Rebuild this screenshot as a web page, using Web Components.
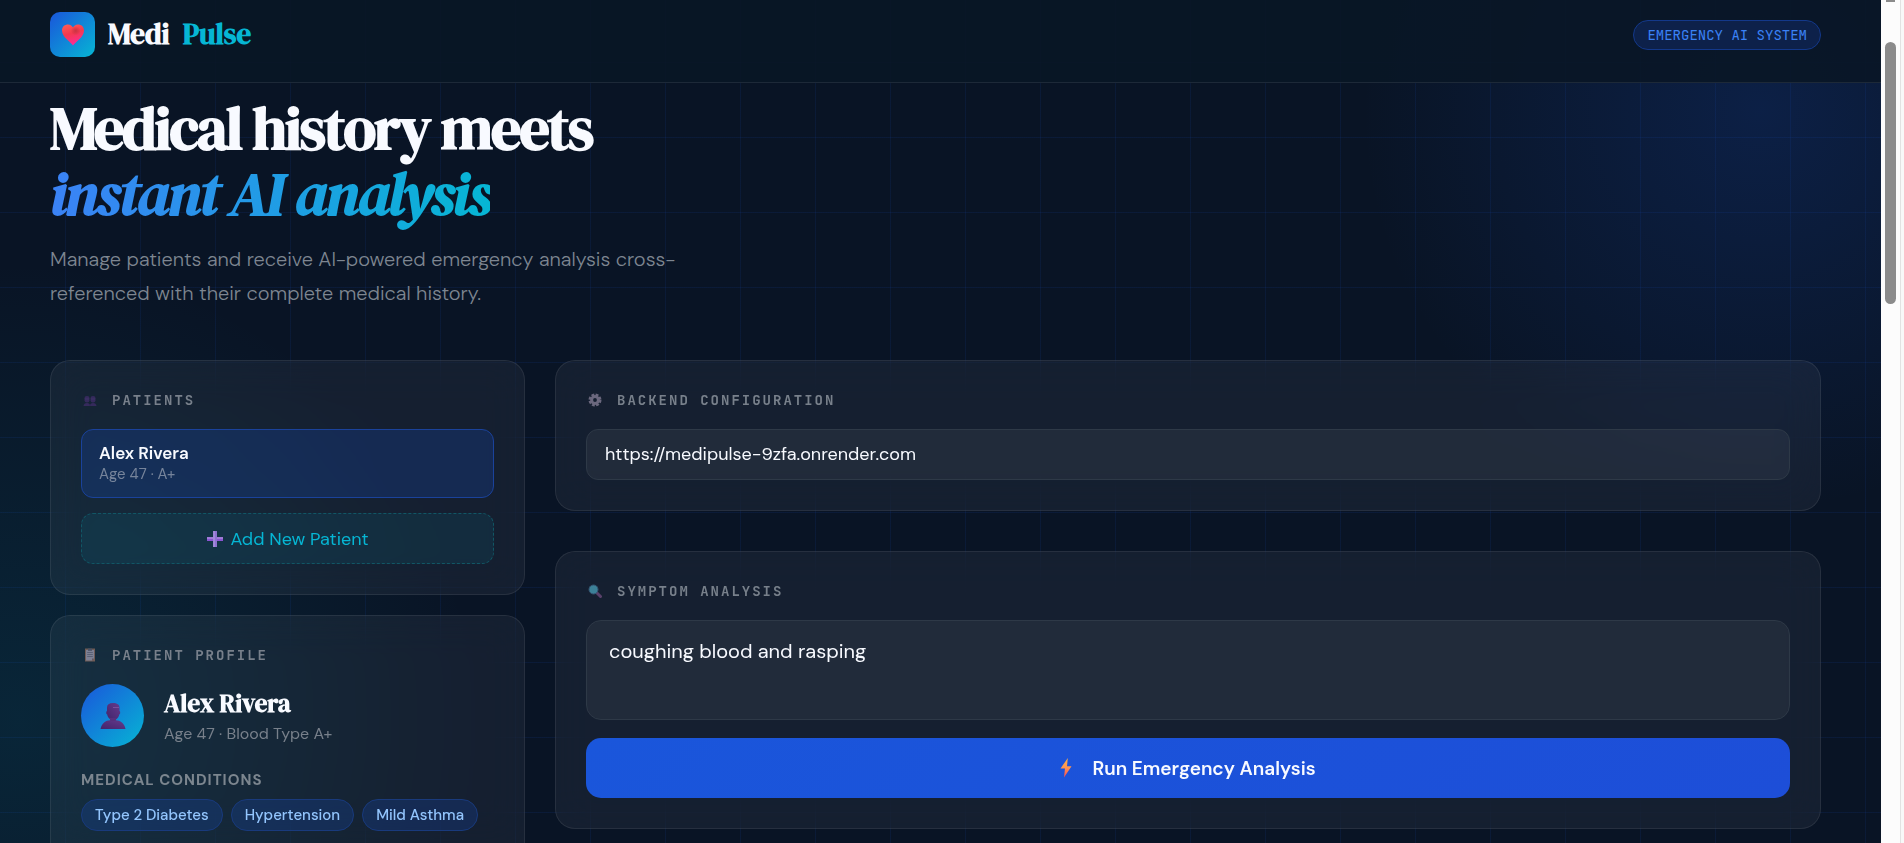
<!DOCTYPE html>
<html lang="en">
<head>
<meta charset="UTF-8">
<meta name="viewport" content="width=device-width, initial-scale=1.0">
<title>MediPulse</title>
<style>
  :root {
    --blue: #1a56db;
    --cyan: #06b6d4;
    --text: #f8faff;
    --muted: #78808b;
    --sans: 'DM Sans', Inter, sans-serif;
    --serif: 'DM Serif Display', 'Liberation Serif', serif;
    --mono: 'JetBrains Mono', 'Liberation Mono', monospace;
  }
  body {
    margin: 0;
    background: #091425;
    color: var(--text);
    font-family: var(--sans);
  }
</style>
</head>
<body>
<medi-app>
  <medi-header slot="header"></medi-header>
  <medi-hero></medi-hero>
  <medi-dashboard>
    <medi-card slot="side" label="Patients" icon="people">
      <patient-item name="Alex Rivera" info="Age 47 · A+"></patient-item>
      <add-patient></add-patient>
    </medi-card>
    <medi-card slot="side" label="Patient Profile" icon="clipboard">
      <patient-profile name="Alex Rivera" info="Age 47 · Blood Type A+">
        <medi-tag>Type 2 Diabetes</medi-tag>
        <medi-tag>Hypertension</medi-tag>
        <medi-tag>Mild Asthma</medi-tag>
      </patient-profile>
    </medi-card>
    <medi-card slot="main" label="Backend Configuration" icon="gear">
      <backend-url value="https://medipulse-9zfa.onrender.com"></backend-url>
    </medi-card>
    <medi-card slot="main" label="Symptom Analysis" icon="search">
      <symptom-form value="coughing blood and rasping"></symptom-form>
    </medi-card>
  </medi-dashboard>
</medi-app>

<script>
const icons = {
  heart: `
    <svg viewBox="0 0 24 24" width="24" height="24" aria-hidden="true">
      <defs>
        <linearGradient id="h" x1="0.2" y1="0" x2="0.5" y2="1">
          <stop offset="0" stop-color="#ff5a55"/><stop offset="0.45" stop-color="#f4394f"/><stop offset="1" stop-color="#ff2a9b"/>
        </linearGradient>
        <radialGradient id="s" cx="0.62" cy="0.3" r="0.22">
          <stop offset="0" stop-color="#c93343"/><stop offset="1" stop-color="#c93343" stop-opacity="0"/>
        </radialGradient>
      </defs>
      <path fill="url(#h)" d="M12 22.500C10 19 1 14.500 1 7.500C1 3.500 4 1.500 7 1.500C9.500 1.500 11.200 3 12 4.500C12.800 3 14.500 1.500 17 1.500C20 1.500 23 3.500 23 7.500C23 14.500 14 19 12 22.500Z"/>
      <path fill="url(#s)" d="M12 22.500C10 19 1 14.500 1 7.500C1 3.500 4 1.500 7 1.500C9.500 1.500 11.200 3 12 4.500C12.800 3 14.500 1.500 17 1.500C20 1.500 23 3.500 23 7.500C23 14.500 14 19 12 22.500Z"/>
    </svg>`,
  people: `
    <svg viewBox="0 0 14 14" width="14" height="14" aria-hidden="true">
      <g fill="#352a5c">
        <rect x="1.500" y="3" width="5" height="6.500" rx="2.200"/><rect x="7.500" y="3" width="5" height="6.500" rx="2.200"/>
        <path d="M.5 13C.5 11 2 10 4 10S7 10.800 7 13ZM7 13C7 10.800 8 10 10 10S13.500 11 13.500 13Z"/>
      </g>
      <path d="M2 6h4M8 6h4" stroke="#43366c" stroke-width=".8"/>
    </svg>`,
  clipboard: `
    <svg viewBox="0 0 14 14" width="14" height="14" aria-hidden="true">
      <path fill="#705c56" d="M2 .5h10v13H2z"/>
      <path fill="#7d8094" d="M3 2h8v8.500L9 12.500H3z"/>
      <path fill="#4b5265" d="M5 .5h4v2.300H5z"/>
      <path d="M4.200 4.500h5.600M4.200 6.500h5.600M4.200 8.500h5.600" stroke="#555d73" stroke-width=".9"/>
      <path fill="#5c5560" d="M9 12.500v-2h2z"/>
    </svg>`,
  gear: `
    <svg viewBox="0 0 14 14" width="14" height="14" aria-hidden="true">
      <circle cx="7" cy="7" r="5.300" fill="none" stroke="#6b687e" stroke-width="2.400" stroke-dasharray="2.800 1.363"/>
      <circle cx="7" cy="7" r="3.400" fill="none" stroke="#6b687e" stroke-width="3"/>
    </svg>`,
  search: `
    <svg viewBox="0 0 14 14" width="14" height="14" aria-hidden="true">
      <path d="M9 9l3.500 3.500" stroke="#59406a" stroke-width="3" stroke-linecap="round"/>
      <circle cx="5.500" cy="5.500" r="4.500" fill="#3c8198" stroke="#355572" stroke-width="1"/>
    </svg>`,
  plus: `
    <svg viewBox="0 0 18 18" width="18" height="18" aria-hidden="true">
      <path fill="#8a54d2" d="M1 7.200h16v3.800H1z"/>
      <path fill="#a985dd" d="M1 7.200h16v1.600H1z"/>
      <path fill="#8f72d0" d="M7.200 1h3.800v16H7.200z"/>
      <path fill="#a98fe0" d="M7.200 1h1.600v16H7.200z"/>
    </svg>`,
  person: `
    <svg viewBox="0 0 26 26" width="26" height="26" aria-hidden="true">
      <defs>
        <linearGradient id="g" x1="0" y1="1" x2="1" y2="0">
          <stop offset="0" stop-color="#42246b"/><stop offset="1" stop-color="#643a8c"/>
        </linearGradient>
      </defs>
      <path fill="url(#g)" d="M7 4.500C7 1.500 9 0 13 0S19.500 1.500 19.500 4.500V8C20.500 8 20.500 11.500 19.200 11.500C18.800 15 16 17 13.200 17S7.700 15 7.200 11.500C6 11.500 6 8 7 8Z"/>
      <path fill="#57307b" d="M10 15h6v4h-6z"/>
      <path fill="url(#g)" d="M.5 26C1.500 20 6 17.300 10 17.200Q13 19 16 17.200C20 17.300 24.500 20 25.500 26Z"/>
      <path stroke="#7a4f9c" stroke-width="1" d="M13 4.500h6"/>
    </svg>`,
  bolt: `
    <svg viewBox="0 0 12 20" width="12" height="20" aria-hidden="true">
      <defs>
        <linearGradient id="b" x1="0" y1="0" x2="0" y2="1">
          <stop offset="0" stop-color="#ffb347"/><stop offset="0.5" stop-color="#ff9350"/><stop offset="1" stop-color="#f84a55"/>
        </linearGradient>
      </defs>
      <path fill="url(#b)" d="M7.800 0L.5 10.500H5L4 19.500L11.500 8.300H7Z"/>
    </svg>`
};

// Shared base: every element renders its template once into an open shadow root
class MediElement extends HTMLElement {
  constructor() {
    super();
    this.attachShadow({ mode: 'open' });
  }

  attr(name) {
    return this.getAttribute(name) || '';
  }

  connectedCallback() {
    const template = document.createElement('template');
    template.innerHTML = `
      <style>
        * { box-sizing: border-box; }
        :host { display: block; }
        svg { display: block; flex: none; }
        ${this.getStyles()}
      </style>
      ${this.getTemplate()}
    `;
    this.shadowRoot.replaceChildren(template.content.cloneNode(true));
  }
}

class MediApp extends MediElement {
  getTemplate() {
    return `
      <div class="page">
        <slot name="header"></slot>
        <main><slot></slot></main>
      </div>
      <medi-scrollbar></medi-scrollbar>
    `;
  }
  getStyles() {
    return `
      :host { display: flex; height: 100vh; overflow: hidden; }
      .page {
        flex: 1;
        min-width: 0;
        overflow: hidden;
        background:
          radial-gradient(circle 400px at calc(100% - 120px) 110px, rgba(26, 86, 219, 0.18), transparent) no-repeat,
          radial-gradient(circle 460px at 20px 720px, rgba(6, 182, 212, 0.11), transparent) no-repeat,
          linear-gradient(90deg, rgba(26, 86, 219, 0.1) 1px, transparent 1px) 65px 0 / 75px 75px,
          linear-gradient(rgba(26, 86, 219, 0.1) 1px, transparent 1px) 0 62px / 75px 75px,
          #091425;
      }
      main { padding: 12px 60px 0 50px; }
    `;
  }
}

class MediScrollbar extends MediElement {
  getTemplate() {
    return `<div class="cap"></div><div class="thumb"></div>`;
  }
  getStyles() {
    return `
      :host {
        display: flex;
        flex-direction: column;
        align-items: center;
        gap: 40px;
        box-sizing: border-box;
        width: 23px;
        padding-right: 4px;
        background: linear-gradient(90deg, #fcfcfc 19px, #e2e2e2 19px 20px, #f8f8f8 20px);
      }
      .cap { width: 9px; height: 2px; background: #8b8b8b; }
      .thumb { width: 11px; height: 262px; border-radius: 6px; background: #8b8b8b; }
    `;
  }
}

class MediHeader extends MediElement {
  getTemplate() {
    return `
      <header>
        <div class="brand">
          <span class="logo">${icons.heart}</span>
          <span>Medi</span>
          <span class="accent">Pulse</span>
        </div>
        <span class="badge">EMERGENCY AI SYSTEM</span>
      </header>
    `;
  }
  getStyles() {
    return `
      header {
        display: flex;
        align-items: flex-start;
        justify-content: space-between;
        height: 83px;
        padding: 12px 60px 0 50px;
        border-bottom: 1px solid #1d2938;
        background: rgba(9, 22, 38, 0.9);
      }
      .brand {
        display: flex;
        align-items: center;
        gap: 13px;
        font: 700 29px/45px var(--serif);
      }
      .accent { color: var(--cyan); }
      .logo {
        display: grid;
        place-items: center;
        width: 45px;
        height: 45px;
        border-radius: 10px;
        background: linear-gradient(135deg, var(--blue), var(--cyan));
      }
      .badge {
        margin-top: 8px;
        padding: 0 13px;
        border: 1px solid #13388a;
        border-radius: 15px;
        background: #0d214a;
        color: #3b82f6;
        font: 14px/28px var(--mono);
      }
    `;
  }
}

class MediHero extends MediElement {
  getTemplate() {
    return `
      <h1>Medical history meets<br><em>instant AI analysis</em></h1>
      <p>Manage patients and receive AI-powered emergency analysis cross-referenced with their complete medical history.</p>
    `;
  }
  getStyles() {
    return `
      h1 {
        margin: 0 0 15px;
        font: 700 60px/66px var(--serif);
        letter-spacing: -2px;
      }
      em {
        background: linear-gradient(90deg, #3b82f6, var(--cyan));
        -webkit-background-clip: text;
        background-clip: text;
        color: transparent;
      }
      p {
        max-width: 650px;
        margin: 0;
        color: #7e8691;
        font-size: 20px;
        font-weight: 300;
        line-height: 34px;
      }
    `;
  }
}

class MediDashboard extends MediElement {
  getTemplate() {
    return `
      <div class="side"><slot name="side"></slot></div>
      <div class="main"><slot name="main"></slot></div>
    `;
  }
  getStyles() {
    return `
      :host {
        display: grid;
        grid-template-columns: 475px minmax(0, 1fr);
        gap: 30px;
        margin-top: 50px;
      }
      .side, .main { display: flex; flex-direction: column; }
      .side { gap: 20px; }
      .main { gap: 40px; }
    `;
  }
}

class MediCard extends MediElement {
  getTemplate() {
    return `
      <h2>${icons[this.attr('icon')]}<span>${this.attr('label')}</span></h2>
      <div class="content"><slot></slot></div>
    `;
  }
  getStyles() {
    return `
      :host {
        box-sizing: border-box;
        padding: 30px;
        border: 1px solid rgba(255, 255, 255, 0.08);
        border-radius: 20px;
        background: rgba(255, 255, 255, 0.05);
        backdrop-filter: blur(20px);
      }
      h2 {
        display: flex;
        align-items: center;
        gap: 15px;
        margin: 0 0 20px;
        padding-left: 2px;
        color: var(--muted);
        font: 700 14px/18px var(--mono);
        letter-spacing: 2px;
        text-transform: uppercase;
      }
      .content { display: flex; flex-direction: column; gap: 15px; }
    `;
  }
}

class PatientItem extends MediElement {
  getTemplate() {
    return `
      <button type="button">
        <strong>${this.attr('name')}</strong>
        <span>${this.attr('info')}</span>
      </button>
    `;
  }
  getStyles() {
    return `
      button {
        display: flex;
        flex-direction: column;
        width: 100%;
        padding: 12px 17px 14px;
        border: 1px solid #1a429b;
        border-radius: 12px;
        background: rgba(26, 86, 219, 0.2);
        color: var(--text);
        font: inherit;
        text-align: left;
      }
      strong { font-size: 17px; line-height: 23px; font-weight: 600; }
      span { color: #76849b; font-size: 15px; line-height: 18px; }
    `;
  }
}

class AddPatient extends MediElement {
  getTemplate() {
    return `<button type="button">${icons.plus}Add New Patient</button>`;
  }
  getStyles() {
    return `
      button {
        display: flex;
        align-items: center;
        justify-content: center;
        gap: 6px;
        width: 100%;
        height: 51px;
        border: 1px dashed #115665;
        border-radius: 12px;
        background: rgba(6, 182, 212, 0.09);
        color: var(--cyan);
        font: 18px var(--sans);
      }
    `;
  }
}

class PatientProfile extends MediElement {
  getTemplate() {
    return `
      <div class="person">
        <span class="avatar">${icons.person}</span>
        <div>
          <h3>${this.attr('name')}</h3>
          <p>${this.attr('info')}</p>
        </div>
      </div>
      <h4>Medical Conditions</h4>
      <div class="tags"><slot></slot></div>
    `;
  }
  getStyles() {
    return `
      .person { display: flex; align-items: center; gap: 20px; }
      .avatar {
        display: grid;
        place-items: center;
        width: 63px;
        height: 63px;
        border-radius: 50%;
        background: linear-gradient(135deg, var(--blue), var(--cyan));
      }
      h3 { margin: 0; font: 700 25px/36px var(--serif); }
      p { margin: 0; color: var(--muted); font-size: 16px; line-height: 26px; }
      h4 {
        margin: 23px 0 9px;
        color: #7c868f;
        font-size: 15px;
        line-height: 20px;
        letter-spacing: 1px;
        text-transform: uppercase;
      }
      .tags { display: flex; flex-wrap: wrap; gap: 8px; padding-bottom: 40px; }
    `;
  }
}

class MediTag extends MediElement {
  getTemplate() {
    return `<slot></slot>`;
  }
  getStyles() {
    return `
      :host {
        padding: 0 13px;
        border: 1px solid #193a7c;
        border-radius: 16px;
        background: rgba(26, 86, 219, 0.2);
        color: #93c5fd;
        font-size: 15px;
        font-weight: 500;
        line-height: 30px;
      }
    `;
  }
}

class BackendUrl extends MediElement {
  getTemplate() {
    return `<input type="text" aria-label="Backend URL" value="${this.attr('value')}">`;
  }
  getStyles() {
    return `
      input {
        display: block;
        width: 100%;
        height: 51px;
        padding: 0 18px 2px;
        border: 1px solid #2e3947;
        border-radius: 12px;
        outline: none;
        background: rgba(255, 255, 255, 0.05);
        color: var(--text);
        font: 18px var(--sans);
      }
    `;
  }
}

class SymptomForm extends MediElement {
  getTemplate() {
    return `
      <textarea aria-label="Symptoms">${this.attr('value')}</textarea>
      <button type="button">${icons.bolt}Run Emergency Analysis</button>
    `;
  }
  getStyles() {
    return `
      textarea {
        display: block;
        width: 100%;
        height: 100px;
        margin-bottom: 18px;
        padding: 14px 22px;
        border: 1px solid #2e3947;
        border-radius: 15px;
        outline: none;
        resize: none;
        background: rgba(255, 255, 255, 0.05);
        color: var(--text);
        font: 20px/32px var(--sans);
      }
      button {
        display: flex;
        align-items: center;
        justify-content: center;
        gap: 20px;
        width: 100%;
        height: 60px;
        border: 0;
        border-radius: 15px;
        background: linear-gradient(135deg, var(--blue), #1d4ed8);
        color: var(--text);
        font: 600 19px var(--sans);
      }
    `;
  }
}

customElements.define('medi-scrollbar', MediScrollbar);
customElements.define('medi-app', MediApp);
customElements.define('medi-header', MediHeader);
customElements.define('medi-hero', MediHero);
customElements.define('medi-dashboard', MediDashboard);
customElements.define('medi-card', MediCard);
customElements.define('patient-item', PatientItem);
customElements.define('add-patient', AddPatient);
customElements.define('patient-profile', PatientProfile);
customElements.define('medi-tag', MediTag);
customElements.define('backend-url', BackendUrl);
customElements.define('symptom-form', SymptomForm);
</script>
</body>
</html>
